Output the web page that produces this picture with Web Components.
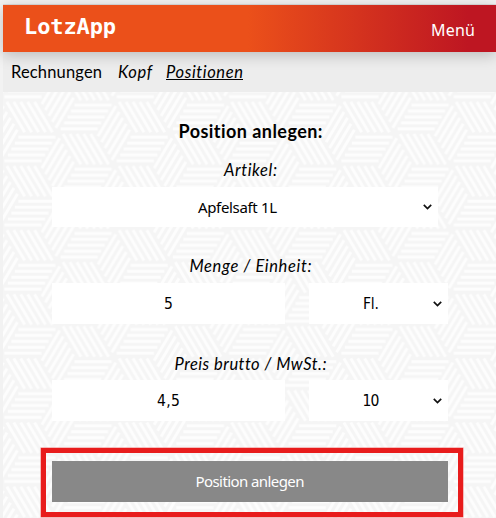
<!DOCTYPE html>
<html lang="de">
<head>
<meta charset="utf-8">
<title>LotzApp</title>
<style>
html, body { margin: 0; height: 518px; overflow: hidden; background: #f2f2f2; }
</style>
</head>
<body>
<lotz-app></lotz-app>
<script>
// Text line whose letter spacing is adjusted to fill the given width.
class FitText extends HTMLElement {
  connectedCallback() {
    const root = this.attachShadow({ mode: 'open' });
    root.innerHTML = `<style>
      :host { display: inline-block; white-space: nowrap; font-variant-ligatures: none; }
      span { display: inline-block; }
    </style><span><slot></slot></span>`;
    const span = root.querySelector('span');
    const target = parseFloat(this.getAttribute('width'));
    const gap = (target - span.getBoundingClientRect().width) / (this.textContent.length - 1);
    span.style.letterSpacing = gap.toFixed(3) + 'px';
    span.style.marginRight = (-gap).toFixed(3) + 'px';
  }
}

// Woven background: hexagons made of three striped rhombi.
class WeaveBackground extends HTMLElement {
  connectedCallback() {
    let d = '';
    for (const f of [.13, .315, .5, .685, .87]) {
      d += `M${18.7 * (1 - f) - 2} ${32 * f}h37`;
      d += `M${37.3 * f - 2} -31l17.8 30.2`;
      d += `M${37.3 + 18.7 * f - 2} ${-32 + 32 * f - .9}l17.8 -30.2`;
    }
    let blocks = '';
    for (let i = -2; i < 3; i++) for (let j = -1; j < 4; j++)
      blocks += `<use href="#block" x="${i * 56}" y="${j * 64 - (i & 1 ? 32 : 0)}"/>`;
    this.attachShadow({ mode: 'open' }).innerHTML = `<style>
      :host { display: block; background: #f5f5f5; }
      svg { display: block; width: 100%; height: 100%; }
    </style>
    <svg><defs>
      <path id="block" d="${d}" stroke="#fdfdfd" stroke-width="2.9" fill="none"/>
      <pattern id="weave" width="112" height="64" patternUnits="userSpaceOnUse" patternTransform="translate(1 41) scale(1.003 1.002)">${blocks}</pattern>
    </defs><rect width="100%" height="100%" fill="url(#weave)"/></svg>`;
  }
}

class AppHeader extends HTMLElement {
  connectedCallback() {
    this.attachShadow({ mode: 'open' }).innerHTML = `<style>
      :host { display: flex; justify-content: space-between; box-sizing: border-box; height: 47px;
        padding: 0 21px 0 21px; color: #fff; position: relative; z-index: 1;
        background: linear-gradient(90deg, #eb501a 245px, #be1622 465px);
        box-shadow: 0 3px 14px rgba(0,0,0,.22); }
      .logo { font: bold 22px/44px "DejaVu Sans Mono", monospace; }
      .menu { font: 16px/51px "Noto Sans", sans-serif; }
    </style>
    <fit-text class="logo" width="92">LotzApp</fit-text>
    <fit-text class="menu" width="44">Menü</fit-text>`;
  }
}

class AppTabs extends HTMLElement {
  connectedCallback() {
    this.attachShadow({ mode: 'open' }).innerHTML = `<style>
      :host { display: flex; box-sizing: border-box; height: 40px; padding-left: 8px; gap: 16px;
        background: #ededed; color: #000; font: 16.5px/41px Lato, sans-serif; }
      i { display: block; }
      .current { margin: 11px 0 0 -2px; height: 16px; line-height: 19px; border-bottom: 1px solid #000; }
    </style>
    <fit-text width="91">Rechnungen</fit-text>
    <i><fit-text width="34">Kopf</fit-text></i>
    <i class="current"><fit-text width="77">Positionen</fit-text></i>`;
  }
}

class FormField extends HTMLElement {
  connectedCallback() {
    const select = this.hasAttribute('select');
    this.attachShadow({ mode: 'open' }).innerHTML = `<style>
      :host { display: flex; align-items: center; justify-content: center; box-sizing: border-box;
        height: 41px; background: #fff; color: #000; font: 15px/20px "Noto Sans", sans-serif; }
      :host([digits]) { font: 15.5px/20px "DejaVu Sans Condensed", "DejaVu Sans", sans-serif; font-stretch: condensed; }
      .value { flex: 1; text-align: center; }
      svg { width: 9px; height: 6px; margin-right: 6px; }
    </style><span class="value"><slot></slot></span>
    ${select ? '<svg viewBox="0 0 9 6"><path d="M.8 .9L4.5 4.6L8.2 .9" fill="none" stroke="#111" stroke-width="1.7"/></svg>' : ''}`;
  }
}

class ActionButton extends HTMLElement {
  connectedCallback() {
    this.attachShadow({ mode: 'open' }).innerHTML = `<style>
      :host { display: block; box-sizing: border-box; border: 5px solid #e81c1c; padding: 8px 10px 10px 6px; height: 69px;
        box-shadow: 0 0 0 .5px #f08080; }
      .button { height: 41px; background: #888; color: #fff; text-align: center;
        font: 15px/41px "Noto Sans", sans-serif; }
    </style><div class="button"><slot></slot></div>`;
  }
}

class LotzApp extends HTMLElement {
  connectedCallback() {
    this.attachShadow({ mode: 'open' }).innerHTML = `<style>
      :host { display: block; box-sizing: border-box; height: 518px; padding: 4px 0 0 3px; }
      .page { border-top: 1px solid #ddd; }
      main { display: grid; height: 426px; overflow: hidden; }
      main > * { grid-area: 1 / 1; }
      .form { padding: 26px 0 0 49px; color: #000; z-index: 0; }
      h1, .label { margin: 0; width: 397px; text-align: center; }
      h1 { font: bold 18px/26px Lato, sans-serif; }
      .label { font: italic 16.5px/24px Lato, sans-serif; }
      .row { display: grid; grid-template-columns: 233px 139px; gap: 24px; }
      action-button { width: 422px; margin: 27px 0 0 -11px; }
    </style>
    <div class="page">
      <app-header></app-header>
      <app-tabs></app-tabs>
      <main>
        <weave-background></weave-background>
        <div class="form">
          <h1><fit-text width="144">Position anlegen:</fit-text></h1>
          <div class="label" style="margin-top:14px"><fit-text width="53">Artikel:</fit-text></div>
          <form-field select style="width:386px;height:40px;margin-top:5px"><fit-text width="79">Apfelsaft 1L</fit-text></form-field>
          <div class="label" style="margin-top:27px"><fit-text width="122">Menge / Einheit:</fit-text></div>
          <div class="row" style="margin-top:5px">
            <form-field digits>5</form-field>
            <form-field digits select><fit-text width="16">Fl.</fit-text></form-field>
          </div>
          <div class="label" style="margin-top:28px"><fit-text width="152">Preis brutto / MwSt.:</fit-text></div>
          <div class="row" style="margin-top:4px">
            <form-field digits><fit-text width="23">4,5</fit-text></form-field>
            <form-field digits select><fit-text width="17">10</fit-text></form-field>
          </div>
          <action-button><fit-text width="109">Position anlegen</fit-text></action-button>
        </div>
      </main>
    </div>`;
  }
}

customElements.define('fit-text', FitText);
customElements.define('weave-background', WeaveBackground);
customElements.define('app-header', AppHeader);
customElements.define('app-tabs', AppTabs);
customElements.define('form-field', FormField);
customElements.define('action-button', ActionButton);
customElements.define('lotz-app', LotzApp);
</script>
</body>
</html>
